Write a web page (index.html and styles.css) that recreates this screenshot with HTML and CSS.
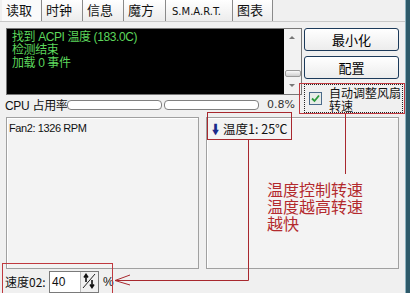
FILE: index.html
```html
<!DOCTYPE html>
<html lang="zh-CN">
<head>
    <meta charset="UTF-8">
    <title>SpeedFan 读取</title>
    <link rel="stylesheet" href="styles.css">
</head>
<body>
    <div id="window">
        <div class="tabs">
            <div class="tab active" style="width: 40px">读取</div>
            <div class="tab" style="width: 41px">时钟</div>
            <div class="tab" style="width: 41px">信息</div>
            <div class="tab" style="width: 42px">魔方</div>
            <div class="tab latin" style="width: 67px">S.M.A.R.T.</div>
            <div class="tab" style="width: 40px">图表</div>
        </div>

        <div class="panel">
            <div class="top">
                <div class="left-col">
                    <div class="log">
                        <div class="log-text">
                            <div>找到 ACPI 温度 (183.0C)</div>
                            <div>检测结束</div>
                            <div>加载 0 事件</div>
                        </div>
                        <div class="scrollbar">
                            <span class="arrow up"></span>
                            <span class="thumb"></span>
                            <span class="arrow down"></span>
                        </div>
                    </div>
                    <div class="cpu-row">
                        <span class="cpu-label">CPU 占用率</span>
                        <div class="bar"></div>
                        <div class="bar"></div>
                        <span class="cpu-value">0.8%</span>
                    </div>
                </div>
                <div class="side">
                    <button class="win-button">最小化</button>
                    <button class="win-button">配置</button>
                    <label class="auto-fan">
                        <span class="checkbox">
                            <svg width="9" height="9" viewBox="0 0 9 9"><path d="M1 4.5 L3.5 7 L8 1.5" fill="none" stroke="#2a9a3a" stroke-width="1.8"/></svg>
                        </span>
                        <span class="auto-text">自动调整风扇<br>转速</span>
                    </label>
                </div>
            </div>

            <div class="groups">
                <div class="group">
                    <div class="fan">Fan2: 1326 RPM</div>
                </div>
                <div class="group">
                    <div class="temp"><span class="temp-arrow">&#129051;</span>温度1: 25℃</div>
                </div>
            </div>

            <div class="speed-row">
                <span class="speed-label">速度02:</span>
                <div class="spin-input">
                    <span class="spin-value">40</span>
                    <span class="spin-btn">
                        <svg width="16" height="18" viewBox="0 0 16 18">
                            <path d="M2 16 L14 2" stroke="#222" stroke-width="1"/>
                            <path d="M5 10 V3 M3 5.5 L5 2.5 L7 5.5" fill="none" stroke="#111" stroke-width="1.6"/>
                            <path d="M11 8 V15 M9 12.5 L11 15.5 L13 12.5" fill="none" stroke="#111" stroke-width="1.6"/>
                        </svg>
                    </span>
                </div>
                <span class="percent">%</span>
            </div>
        </div>

        <!-- annotation layer -->
        <svg class="marks" width="410" height="293" viewBox="0 0 410 293">
            <rect x="299.5" y="83.5" width="105" height="30" fill="none" stroke="#c0393f"/>
            <rect x="207.5" y="112.5" width="84" height="27" fill="none" stroke="#a8282e"/>
            <rect x="2.5" y="263.5" width="110" height="40" fill="none" stroke="#c0393f"/>
            <path d="M345.5 114 V174" stroke="#a8282e" fill="none"/>
            <path d="M248.5 140 V280.5 H115" stroke="#a8282e" fill="none"/>
            <path d="M130 275 L115 280.5 L130 285" stroke="#a8282e" fill="none"/>
        </svg>
        <div class="note">
            <div>温度控制转速</div>
            <div>温度越高转速</div>
            <div>越快</div>
        </div>
        <div class="frame-edge"></div>
    </div>
</body>
</html>
```

FILE: styles.css
```css
body {
    margin: 0;
    background-color: #f0f0f0;
    font-family: "Liberation Sans", "Noto Sans CJK SC", sans-serif;
    font-size: 12px;
    color: #111;
}
#window {
    position: relative;
    width: 410px;
    height: 293px;
    overflow: hidden;
    background-color: #f0f0f0;
}
.tabs {
    display: flex;
    height: 21px;
    padding-left: 2px;
    border-bottom: 1px solid #c8c8c8;
}
.tab {
    box-sizing: border-box;
    padding: 2px 0 0 4px;
    font-size: 13px;
    line-height: 18px;
    border-right: 1px solid #8a8a8a;
    background: linear-gradient(#ffffff, #ececec);
    white-space: nowrap;
}
.tab.active {
    background-color: #fafafa;
    background-image: none;
}
.tab.latin {
    font-family: "DejaVu Sans", sans-serif;
    font-size: 10px;
    padding: 3px 0 0 6px;
}
.panel {
    padding: 6px 0 0 6px;
}
.top {
    display: flex;
    gap: 2px;
}
.left-col {
    width: 296px;
}
.log {
    display: flex;
    height: 67px;
    background-color: #000;
    border: 1px solid #777;
    box-sizing: border-box;
}
.log-text {
    flex: 1;
    padding: 2px 0 0 5px;
    color: #5cd65c;
    line-height: 13px;
    letter-spacing: -0.4px;
}
.scrollbar {
    position: relative;
    width: 17px;
    background-color: #f2f2f2;
}
.arrow {
    position: absolute;
    left: 5px;
    width: 0;
    height: 0;
    border-left: 3px solid transparent;
    border-right: 3px solid transparent;
}
.arrow.up {
    top: 7px;
    border-bottom: 3px solid #777;
}
.arrow.down {
    bottom: 7px;
    border-top: 3px solid #777;
}
.thumb {
    position: absolute;
    left: 1px;
    top: 41px;
    width: 14px;
    height: 5px;
    border: 1px solid #9a9a9a;
    border-radius: 2px;
    background: linear-gradient(#fafafa, #cfcfcf);
}
.cpu-row {
    display: flex;
    align-items: center;
    height: 19px;
    margin-left: -1px;
}
.cpu-label {
    flex: none;
    width: 62px;
    white-space: nowrap;
    letter-spacing: -0.3px;
}
.bar {
    width: 93px;
    height: 8px;
    margin-right: 2px;
    border: 1px solid #808080;
    border-radius: 4px;
    background-color: #fff;
}
.cpu-value {
    margin-left: 6px;
    font-family: "DejaVu Sans", sans-serif;
    font-size: 11px;
    color: #333;
}
.side {
    display: flex;
    flex-direction: column;
    width: 95px;
}
.win-button {
    height: 23px;
    margin-bottom: 5px;
    border: 1px solid #1c3a5a;
    border-radius: 3px;
    background: linear-gradient(#ffffff, #ececec);
    font-family: "Noto Sans CJK SC", sans-serif;
    font-size: 13px;
    padding: 0;
}
.auto-fan {
    display: flex;
    align-items: center;
    padding: 0 0 0 4px;
    margin: 0 -4px 0 0;
    height: 29px;
    border: 1px dotted #222;
    box-sizing: border-box;
}
.checkbox {
    display: flex;
    align-items: center;
    justify-content: center;
    flex: none;
    width: 11px;
    height: 11px;
    margin-right: 7px;
    border: 1px solid #4a6a8a;
    background: #e8ece8;
}
.auto-text {
    white-space: nowrap;
    font-family: "Noto Sans CJK SC", sans-serif;
    font-size: 12px;
    line-height: 13px;
}
.groups {
    display: flex;
    gap: 7px;
    margin-top: 3px;
}
.group {
    width: 191px;
    height: 150px;
    border: 1px solid #a0a0a0;
    box-shadow: inset 1px 1px 0 #fff;
    background-color: #f3f3f3;
}
.fan {
    padding: 4px 0 0 2px;
    font-size: 11px;
    letter-spacing: -0.4px;
}
.temp {
    display: flex;
    align-items: center;
    padding: 1px 0 0 5px;
    font-family: "Noto Sans CJK SC", sans-serif;
    font-size: 12.5px;
    line-height: 20px;
}
.temp-arrow {
    color: #1a2a8a;
    font-family: "DejaVu Sans", sans-serif;
    font-size: 14px;
    font-weight: bold;
    margin-right: 4px;
}
.speed-row {
    display: flex;
    align-items: center;
    height: 25px;
    margin-left: -1px;
}
.speed-label {
    width: 44px;
    font-family: "Noto Sans CJK SC", sans-serif;
    font-size: 12px;
}
.spin-input {
    display: flex;
    height: 20px;
    border: 1px solid #7a7a7a;
    background-color: #fff;
}
.spin-value {
    width: 28px;
    padding-left: 2px;
    line-height: 20px;
}
.spin-btn {
    width: 17px;
    background-color: #f0f0f0;
    border-left: 1px solid #bbb;
}
.percent {
    margin-left: 4px;
}
.marks {
    position: absolute;
    top: 0;
    left: 0;
    pointer-events: none;
}
.note {
    position: absolute;
    left: 267px;
    top: 181px;
    color: #b32a2e;
    font-family: "Noto Sans CJK SC", sans-serif;
    font-size: 16px;
    line-height: 17px;
}
.note div {
    height: 17px;
}
.frame-edge {
    position: absolute;
    top: 0;
    right: 0;
    width: 4px;
    height: 293px;
    background-color: #2e5a6a;
    border-left: 1px solid #8fb3c0;
}
```
